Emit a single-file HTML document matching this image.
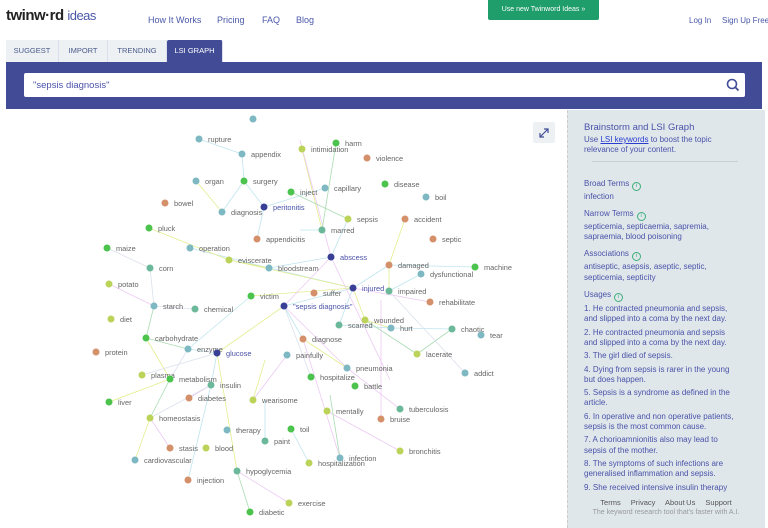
<!DOCTYPE html>
<html><head><meta charset="utf-8"><style>
*{margin:0;padding:0;box-sizing:border-box}
body{width:768px;height:528px;overflow:hidden;background:#fff;font-family:"Liberation Sans",sans-serif;position:relative}
.a{position:absolute;white-space:nowrap}
.nav{font-size:9px;color:#4a58a8}
.tab{position:absolute;top:40px;height:22px;font-size:7.5px;color:#4a5a8a;background:#edf1f4;line-height:22px;text-align:center;border-right:1px solid #dde}
#side{left:567px;top:110px;width:198px;height:418px;background:#dfe7eb;border-left:1px dashed #ccc;font-size:8px;color:#4a52a8;padding:12px 0 0 16px;line-height:10.3px;white-space:normal}
#side .w{width:156px}
#side h1{font-size:9.5px;font-weight:normal;margin-bottom:1px;line-height:12px}
#side .h{margin-top:6px;line-height:12px}
#side p{margin-top:1px}
#u p{margin-top:3px}
.i{display:inline-block;width:9px;height:9px;border:1px solid #3fae7a;border-radius:50%;font-size:6px;line-height:7px;text-align:center;color:#3fae7a;margin-left:3px;vertical-align:-1px}
svg text{font-family:"Liberation Sans",sans-serif;font-size:7.4px;fill:#666}
</style></head><body>
<div class="a" style="left:6px;top:7px;font-size:15px;font-weight:bold;color:#222;letter-spacing:-0.5px">twinw·rd <span style="color:#4a58a8;font-weight:normal;font-size:13px">ideas</span></div>
<div class="a nav" style="left:148px;top:15px">How It Works</div>
<div class="a nav" style="left:217px;top:15px">Pricing</div>
<div class="a nav" style="left:262px;top:15px">FAQ</div>
<div class="a nav" style="left:296px;top:15px">Blog</div>
<div class="a" style="left:488px;top:0;width:111px;height:20px;background:#1f9d6b;color:#fff;font-size:7px;text-align:center;line-height:20px;border-radius:0 0 2px 2px">Use new Twinword Ideas »</div>
<div class="a nav" style="left:689px;top:16px;font-size:8px">Log In</div>
<div class="a nav" style="left:722px;top:16px;font-size:8px">Sign Up Free</div>
<div class="tab" style="left:6px;width:53px">SUGGEST</div>
<div class="tab" style="left:59px;width:49px">IMPORT</div>
<div class="tab" style="left:108px;width:59px">TRENDING</div>
<div class="tab" style="left:167px;width:56px;background:#424c96;color:#fff;border-radius:2px 2px 0 0">LSI GRAPH</div>
<div class="a" style="left:6px;top:62px;width:756px;height:47px;background:#424c96"></div>
<div class="a" style="left:24px;top:73px;width:721px;height:24px;background:#fff;border-radius:2px;font-size:9.5px;color:#4a52a8;padding:7px 0 0 9px">"sepsis diagnosis"</div>
<svg class="a" style="left:726px;top:78px" width="14" height="14"><circle cx="6" cy="6" r="4.5" fill="none" stroke="#424c96" stroke-width="1.6"/><line x1="9.3" y1="9.3" x2="12.5" y2="12.5" stroke="#424c96" stroke-width="1.8"/></svg>
<div class="a" style="left:533px;top:122px;width:22px;height:21px;background:#eef1f4;border-radius:2px"></div>
<svg class="a" style="left:538px;top:127px" width="12" height="12"><path d="M2 10L10 2M6 2h4v4M2 6v4h4" fill="none" stroke="#424c96" stroke-width="1.2"/></svg>

<svg class="a" style="left:0;top:0" width="566" height="528">
<g stroke-width="0.8" fill="none" opacity="0.75">
<path stroke="#a8dde8" d="M199 139L242 154M242 154L244 181M244 181L222 212M264 207L257 239M264 207L244 181M264 207L325 188M269 268L229 260M269 268L353 288M269 268L190 248M251 296L188 349M284 306L353 288M284 306L303 339M353 288L389 265M353 288L339 325M389 291L421 274M389 265L475 267M339 325L391 328M217 353L188 349M217 353L211 385M211 385L188 480M291 429L309 463M265 441L265 400M391 328L452 329M331 257L269 268M348 219L331 257M300 230L322 230"/>
<path stroke="#dce86a" d="M251 296L353 288M229 260L353 288M269 268L229 260M149 228L229 260M389 265L389 291M389 265L405 219M353 288L365 320M365 320L391 328M303 339L347 368M217 353L237 471M150 418L135 460M109 402L170 379M146 338L170 379M196 181L222 212M302 149L322 230M284 306L217 353M253 400L265 360"/>
<path stroke="#e6b8f0" d="M331 257L284 306M284 306L347 368M347 368L400 409M353 288L430 302M331 257L390 380M253 400L287 355M150 418L170 448M237 471L289 503M189 398L211 385M381 419L381 300M327 411L400 451M300 140L331 257M340 458L303 339M109 284L154 306"/>
<path stroke="#8fd19a" d="M146 338L188 349M154 306L146 338M170 379L150 418M336 143L322 230M417 354L452 329M365 320L417 354M291 192L348 219M237 471L250 512M330 395L340 458"/>
<path stroke="#cfd6e6" d="M188 349L170 379M217 353L142 375M154 306L195 309M211 385L150 418M150 268L154 306M107 248L150 268M389 291L465 373M284 306L311 377"/>
</g>
<g>
<circle cx="253" cy="119" r="3.5" fill="#7eb8c2"/>
<circle cx="199" cy="139" r="3.5" fill="#7eb8c2"/><text x="208" y="142">rupture</text>
<circle cx="242" cy="154" r="3.5" fill="#7eb8c2"/><text x="251" y="157">appendix</text>
<circle cx="336" cy="143" r="3.5" fill="#4cc34c"/><text x="345" y="146">harm</text>
<circle cx="302" cy="149" r="3.5" fill="#bcd35a"/><text x="311" y="152">intimidation</text>
<circle cx="367" cy="158" r="3.5" fill="#d4906a"/><text x="376" y="161">violence</text>
<circle cx="196" cy="181" r="3.5" fill="#7eb8c2"/><text x="205" y="184">organ</text>
<circle cx="244" cy="181" r="3.5" fill="#4cc34c"/><text x="253" y="184">surgery</text>
<circle cx="385" cy="184" r="3.5" fill="#4cc34c"/><text x="394" y="187">disease</text>
<circle cx="291" cy="192" r="3.5" fill="#4cc34c"/><text x="300" y="195">inject</text>
<circle cx="325" cy="188" r="3.5" fill="#7eb8c2"/><text x="334" y="191">capillary</text>
<circle cx="426" cy="197" r="3.5" fill="#7eb8c2"/><text x="435" y="200">boil</text>
<circle cx="165" cy="203" r="3.5" fill="#d4906a"/><text x="174" y="206">bowel</text>
<circle cx="264" cy="207" r="3.5" fill="#3a3f96"/><text x="273" y="210" style="fill:#4a52a8">peritonitis</text>
<circle cx="222" cy="212" r="3.5" fill="#7eb8c2"/><text x="231" y="215">diagnosis</text>
<circle cx="348" cy="219" r="3.5" fill="#bcd35a"/><text x="357" y="222">sepsis</text>
<circle cx="405" cy="219" r="3.5" fill="#d4906a"/><text x="414" y="222">accident</text>
<circle cx="149" cy="228" r="3.5" fill="#4cc34c"/><text x="158" y="231">pluck</text>
<circle cx="257" cy="239" r="3.5" fill="#d4906a"/><text x="266" y="242">appendicitis</text>
<circle cx="322" cy="230" r="3.5" fill="#6cb89a"/><text x="331" y="233">marred</text>
<circle cx="433" cy="239" r="3.5" fill="#d4906a"/><text x="442" y="242">septic</text>
<circle cx="107" cy="248" r="3.5" fill="#4cc34c"/><text x="116" y="251">maize</text>
<circle cx="190" cy="248" r="3.5" fill="#7eb8c2"/><text x="199" y="251">operation</text>
<circle cx="331" cy="257" r="3.5" fill="#3a3f96"/><text x="340" y="260" style="fill:#4a52a8">abscess</text>
<circle cx="229" cy="260" r="3.5" fill="#bcd35a"/><text x="238" y="263">eviscerate</text>
<circle cx="269" cy="268" r="3.5" fill="#7eb8c2"/><text x="278" y="271">bloodstream</text>
<circle cx="150" cy="268" r="3.5" fill="#6cb89a"/><text x="159" y="271">corn</text>
<circle cx="389" cy="265" r="3.5" fill="#d4906a"/><text x="398" y="268">damaged</text>
<circle cx="421" cy="274" r="3.5" fill="#7eb8c2"/><text x="430" y="277">dysfunctional</text>
<circle cx="475" cy="267" r="3.5" fill="#4cc34c"/><text x="484" y="270">machine</text>
<circle cx="109" cy="284" r="3.5" fill="#bcd35a"/><text x="118" y="287">potato</text>
<circle cx="353" cy="288" r="3.5" fill="#3a3f96"/><text x="362" y="291" style="fill:#4a52a8">injured</text>
<circle cx="314" cy="293" r="3.5" fill="#d4906a"/><text x="323" y="296">suffer</text>
<circle cx="251" cy="296" r="3.5" fill="#4cc34c"/><text x="260" y="299">victim</text>
<circle cx="389" cy="291" r="3.5" fill="#6cb89a"/><text x="398" y="294">impaired</text>
<circle cx="154" cy="306" r="3.5" fill="#7eb8c2"/><text x="163" y="309">starch</text>
<circle cx="195" cy="309" r="3.5" fill="#6cb89a"/><text x="204" y="312">chemical</text>
<circle cx="284" cy="306" r="3.5" fill="#3a3f96"/><text x="293" y="309" style="fill:#4a52a8">"sepsis diagnosis"</text>
<circle cx="430" cy="302" r="3.5" fill="#d4906a"/><text x="439" y="305">rehabilitate</text>
<circle cx="111" cy="319" r="3.5" fill="#bcd35a"/><text x="120" y="322">diet</text>
<circle cx="365" cy="320" r="3.5" fill="#bcd35a"/><text x="374" y="323">wounded</text>
<circle cx="339" cy="325" r="3.5" fill="#6cb89a"/><text x="348" y="328">scarred</text>
<circle cx="391" cy="328" r="3.5" fill="#7eb8c2"/><text x="400" y="331">hurt</text>
<circle cx="452" cy="329" r="3.5" fill="#6cb89a"/><text x="461" y="332">chaotic</text>
<circle cx="481" cy="335" r="3.5" fill="#7eb8c2"/><text x="490" y="338">tear</text>
<circle cx="146" cy="338" r="3.5" fill="#4cc34c"/><text x="155" y="341">carbohydrate</text>
<circle cx="303" cy="339" r="3.5" fill="#d4906a"/><text x="312" y="342">diagnose</text>
<circle cx="96" cy="352" r="3.5" fill="#d4906a"/><text x="105" y="355">protein</text>
<circle cx="188" cy="349" r="3.5" fill="#7eb8c2"/><text x="197" y="352">enzyme</text>
<circle cx="217" cy="353" r="3.5" fill="#3a3f96"/><text x="226" y="356" style="fill:#4a52a8">glucose</text>
<circle cx="287" cy="355" r="3.5" fill="#7eb8c2"/><text x="296" y="358">painfully</text>
<circle cx="417" cy="354" r="3.5" fill="#bcd35a"/><text x="426" y="357">lacerate</text>
<circle cx="142" cy="375" r="3.5" fill="#bcd35a"/><text x="151" y="378">plasma</text>
<circle cx="170" cy="379" r="3.5" fill="#4cc34c"/><text x="179" y="382">metabolism</text>
<circle cx="347" cy="368" r="3.5" fill="#7eb8c2"/><text x="356" y="371">pneumonia</text>
<circle cx="311" cy="377" r="3.5" fill="#4cc34c"/><text x="320" y="380">hospitalize</text>
<circle cx="465" cy="373" r="3.5" fill="#7eb8c2"/><text x="474" y="376">addict</text>
<circle cx="211" cy="385" r="3.5" fill="#6cb89a"/><text x="220" y="388">insulin</text>
<circle cx="355" cy="386" r="3.5" fill="#4cc34c"/><text x="364" y="389">battle</text>
<circle cx="109" cy="402" r="3.5" fill="#4cc34c"/><text x="118" y="405">liver</text>
<circle cx="189" cy="398" r="3.5" fill="#d4906a"/><text x="198" y="401">diabetes</text>
<circle cx="253" cy="400" r="3.5" fill="#bcd35a"/><text x="262" y="403">wearisome</text>
<circle cx="327" cy="411" r="3.5" fill="#bcd35a"/><text x="336" y="414">mentally</text>
<circle cx="400" cy="409" r="3.5" fill="#6cb89a"/><text x="409" y="412">tuberculosis</text>
<circle cx="381" cy="419" r="3.5" fill="#d4906a"/><text x="390" y="422">bruise</text>
<circle cx="150" cy="418" r="3.5" fill="#bcd35a"/><text x="159" y="421">homeostasis</text>
<circle cx="227" cy="430" r="3.5" fill="#7eb8c2"/><text x="236" y="433">therapy</text>
<circle cx="291" cy="429" r="3.5" fill="#4cc34c"/><text x="300" y="432">toil</text>
<circle cx="265" cy="441" r="3.5" fill="#6cb89a"/><text x="274" y="444">paint</text>
<circle cx="170" cy="448" r="3.5" fill="#d4906a"/><text x="179" y="451">stasis</text>
<circle cx="206" cy="448" r="3.5" fill="#bcd35a"/><text x="215" y="451">blood</text>
<circle cx="400" cy="451" r="3.5" fill="#bcd35a"/><text x="409" y="454">bronchitis</text>
<circle cx="135" cy="460" r="3.5" fill="#7eb8c2"/><text x="144" y="463">cardiovascular</text>
<circle cx="309" cy="463" r="3.5" fill="#bcd35a"/><text x="318" y="466">hospitalization</text>
<circle cx="340" cy="458" r="3.5" fill="#7eb8c2"/><text x="349" y="461">infection</text>
<circle cx="237" cy="471" r="3.5" fill="#6cb89a"/><text x="246" y="474">hypoglycemia</text>
<circle cx="188" cy="480" r="3.5" fill="#d4906a"/><text x="197" y="483">injection</text>
<circle cx="289" cy="503" r="3.5" fill="#bcd35a"/><text x="298" y="506">exercise</text>
<circle cx="250" cy="512" r="3.5" fill="#4cc34c"/><text x="259" y="515">diabetic</text>
</g></svg>

<div class="a" id="side"><div class="w">
<h1>Brainstorm and LSI Graph</h1>
<div>Use <u style="color:#2a3cd0">LSI keywords</u> to boost the topic relevance of your content.</div>
<div style="width:146px;height:1px;background:#c8d0d4;margin:5px 0 0 8px"></div>
<div class="h" style="margin-top:16px">Broad Terms<span class="i">i</span></div>
<p>infection</p>
<div class="h">Narrow Terms<span class="i">i</span></div>
<p>septicemia, septicaemia, sapremia, sapraemia, blood poisoning</p>
<div class="h">Associations<span class="i">i</span></div>
<p>antiseptic, asepsis, aseptic, septic, septicemia, septicity</p>
<div class="h">Usages<span class="i">i</span></div>
<div id="u" style="height:190px;overflow:hidden">
<p style="margin-top:2px">1. He contracted pneumonia and sepsis, and slipped into a coma by the next day.</p>
<p>2. He contracted pneumonia and sepsis and slipped into a coma by the next day.</p>
<p>3. The girl died of sepsis.</p>
<p>4. Dying from sepsis is rarer in the young but does happen.</p>
<p>5. Sepsis is a syndrome as defined in the article.</p>
<p>6. In operative and non operative patients, sepsis is the most common cause.</p>
<p>7. A chorioamnionitis also may lead to sepsis of the mother.</p>
<p>8. The symptoms of such infections are generalised inflammation and sepsis.</p>
<p>9. She received intensive insulin therapy and pentastarch resuscitation in severe sepsis.</p>
</div>
</div></div>
<div class="a" style="left:567px;top:498px;width:198px;text-align:center;font-size:7.5px;color:#555;word-spacing:8px">Terms Privacy About&#8239;Us Support</div>
<div class="a" style="left:567px;top:509px;width:198px;text-align:center;font-size:7px;color:#999">The keyword research tool that's faster with A.I.</div>
</body></html>
